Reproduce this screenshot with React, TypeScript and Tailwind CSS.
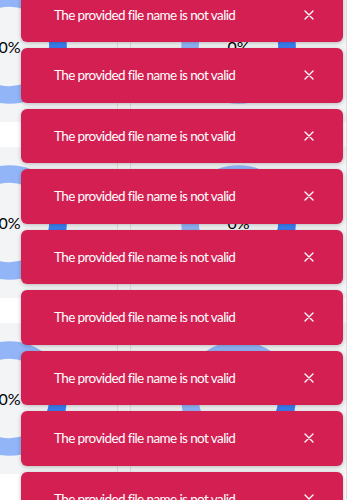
import React from "react";

const Donut = () => {
  // ring: r 48.5, stroke 17.5, dark arc around 3 o'clock
  const r = 48.5;
  const c = 2 * Math.PI * r;
  return (
    <div className="relative w-[115px] h-[115px] flex items-center justify-center">
      <svg width="115" height="115" viewBox="0 0 115 115" className="absolute inset-0">
        <circle cx="57.5" cy="57.5" r={r} fill="none" stroke="#92b5f7" strokeWidth="17.5" />
        <circle
          cx="57.5"
          cy="57.5"
          r={r}
          fill="none"
          stroke="#3b7ff2"
          strokeWidth="17.5"
          strokeDasharray={`${c * 0.16} ${c}`}
          transform="rotate(-30 57.5 57.5)"
        />
      </svg>
      <span className="relative text-[16px] text-black font-['Lato','Liberation_Sans',sans-serif]">0%</span>
    </div>
  );
};

const Card = () => (
  <div className="flex flex-col w-[216px] border-r border-[#dedede] shrink-0">
    {[0, 1, 2].map((i) => (
      <div key={i} className="flex flex-col">
        <div className="h-[151px] bg-[#f3f4f6] flex items-center justify-center">
          <Donut />
        </div>
        <div className="h-[25px] bg-white" />
      </div>
    ))}
  </div>
);

const Toast = () => (
  <div className="h-[54.5px] w-full bg-[#d41f53] rounded-[6px] shadow-[0_1px_4px_rgba(0,0,0,0.25)] flex items-center justify-between pl-[33px] pr-[29px]">
    <p className="text-white text-[13.5px] tracking-[-0.6px] font-['Lato','Liberation_Sans',sans-serif] leading-5">
      The provided file name is not valid
    </p>
    <button className="text-white">
      <svg width="10" height="10" viewBox="0 0 10 10">
        <path d="M1 1 L9 9 M9 1 L1 9" stroke="white" strokeWidth="1.3" strokeLinecap="round" />
      </svg>
    </button>
  </div>
);

export default function App() {
  return (
    <div className="relative w-[350px] h-[500px] overflow-hidden bg-white">
      <div className="flex -ml-[98px] -mt-[29px]">
        <Card />
        <div className="w-[13px] shrink-0 bg-[#f5f5f5] border-r border-[#dedede]" />
        <Card />
      </div>

      <div className="absolute top-[-12.5px] left-[21px] w-[321.5px] flex flex-col gap-[6px]">
        {Array.from({ length: 9 }).map((_, i) => (
          <Toast key={i} />
        ))}
      </div>
    </div>
  );
}
